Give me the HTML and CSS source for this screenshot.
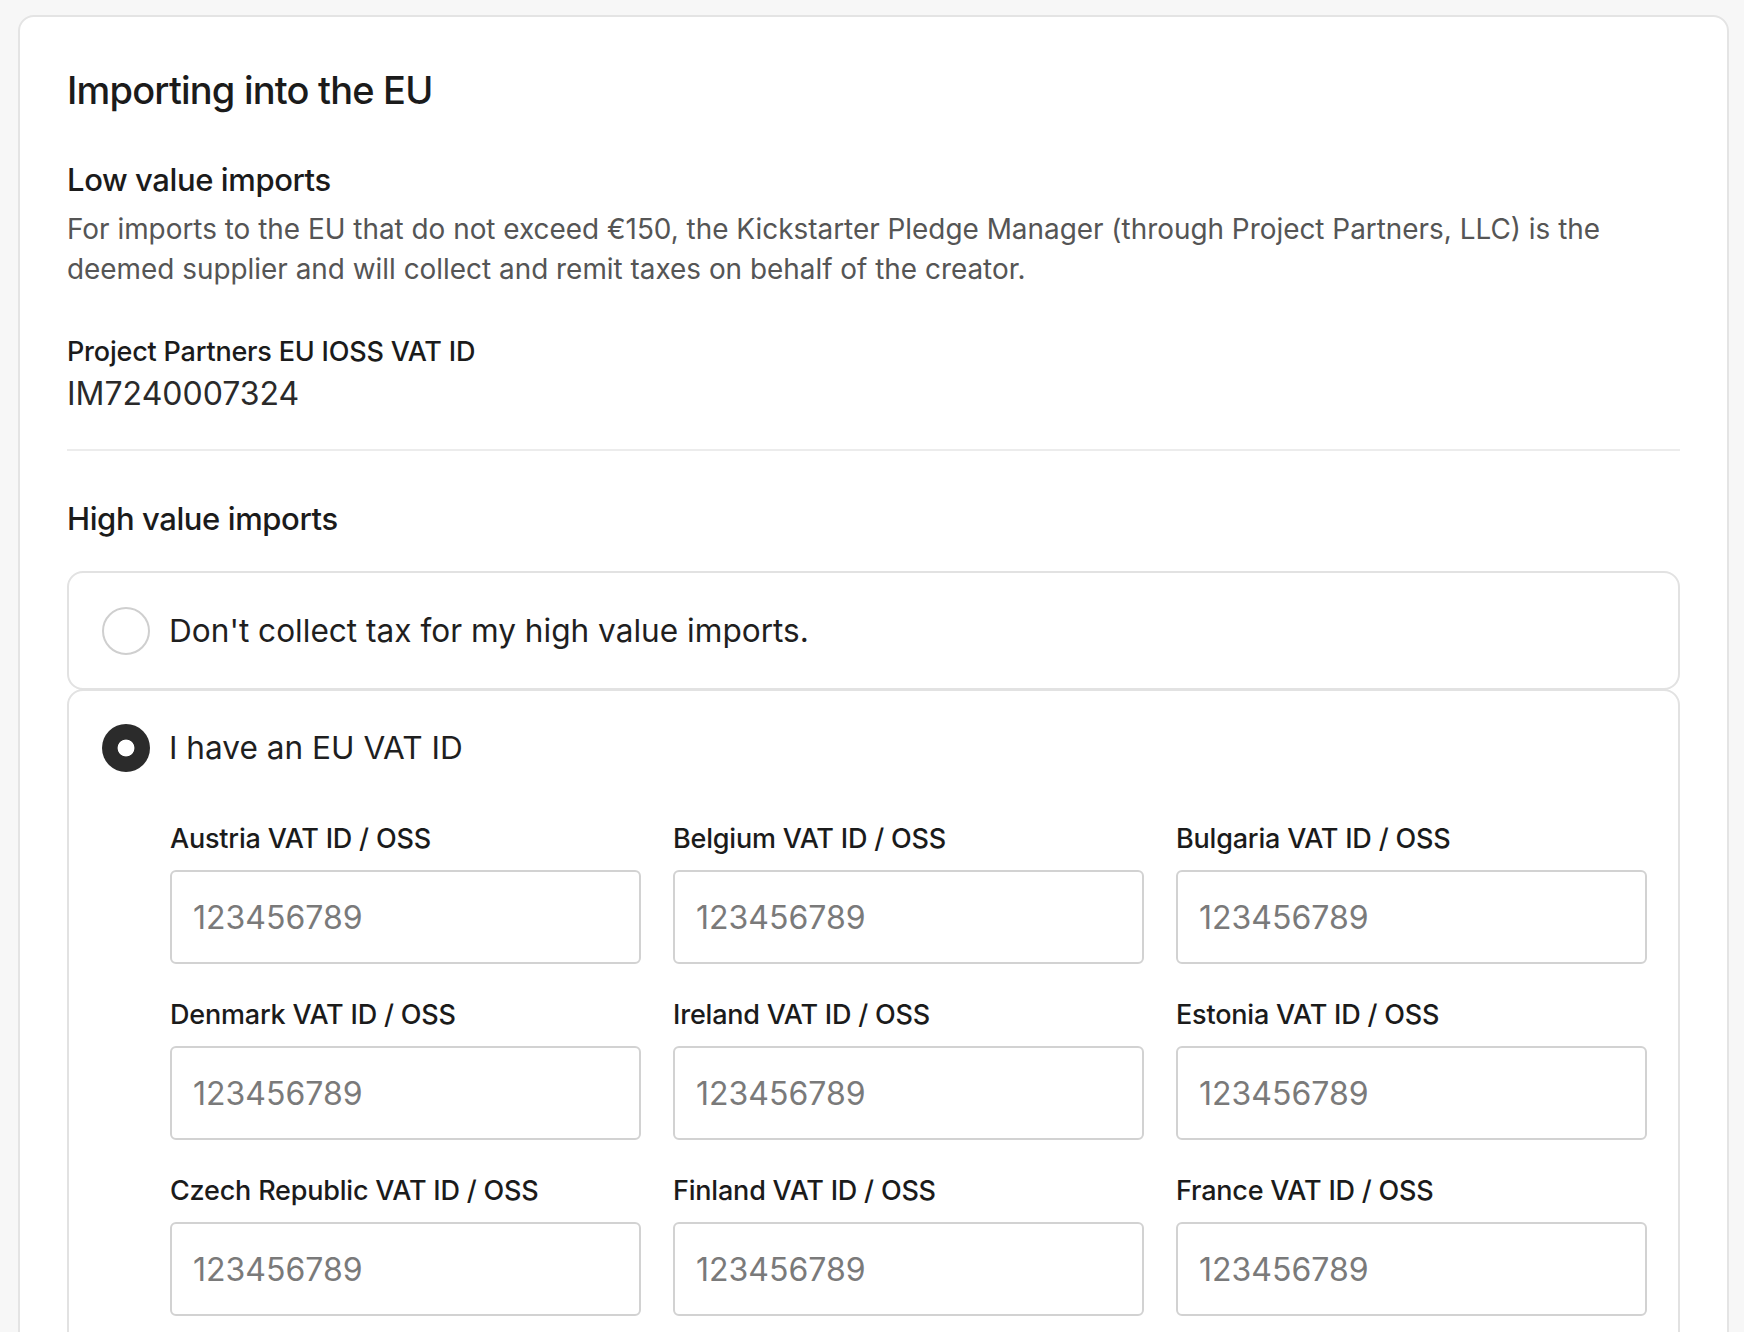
FILE: index.html
```html
<!DOCTYPE html>
<html lang="en">
<head>
<meta charset="utf-8">
<title>Importing into the EU</title>
<link rel="stylesheet" href="styles.css">
</head>
<body>
<main class="card">
  <h1 class="title">Importing into the EU</h1>
  <section class="low">
    <h2 class="subtitle">Low value imports</h2>
    <p class="desc">For imports to the EU that do not exceed €150, the Kickstarter Pledge Manager (through Project Partners, LLC) is the deemed supplier and will collect and remit taxes on behalf of the creator.</p>
    <div class="ioss">
      <div class="ioss-label">Project Partners EU IOSS VAT ID</div>
      <div class="ioss-value">IM7240007324</div>
    </div>
  </section>
  <hr class="divider">
  <section class="high">
    <h2 class="subtitle">High value imports</h2>
    <div class="options">
      <label class="option">
        <span class="option-row">
          <span class="radio"></span>
          <span class="option-text">Don't collect tax for my high value imports.</span>
        </span>
      </label>
      <div class="option option-selected">
        <div class="option-row">
          <span class="radio radio-on"></span>
          <span class="option-text">I have an EU VAT ID</span>
        </div>
        <div class="fields">
          <div class="field"><label class="field-label">Austria VAT ID / OSS</label><input class="field-input" placeholder="123456789"></div>
          <div class="field"><label class="field-label">Belgium VAT ID / OSS</label><input class="field-input" placeholder="123456789"></div>
          <div class="field"><label class="field-label">Bulgaria VAT ID / OSS</label><input class="field-input" placeholder="123456789"></div>
          <div class="field"><label class="field-label">Denmark VAT ID / OSS</label><input class="field-input" placeholder="123456789"></div>
          <div class="field"><label class="field-label">Ireland VAT ID / OSS</label><input class="field-input" placeholder="123456789"></div>
          <div class="field"><label class="field-label">Estonia VAT ID / OSS</label><input class="field-input" placeholder="123456789"></div>
          <div class="field"><label class="field-label">Czech Republic VAT ID / OSS</label><input class="field-input" placeholder="123456789"></div>
          <div class="field"><label class="field-label">Finland VAT ID / OSS</label><input class="field-input" placeholder="123456789"></div>
          <div class="field"><label class="field-label">France VAT ID / OSS</label><input class="field-input" placeholder="123456789"></div>
        </div>
      </div>
    </div>
  </section>
</main>
</body>
</html>
```
FILE: styles.css
```css
* { box-sizing: border-box; }
html, body { margin: 0; padding: 0; }
body {
  background: #f7f7f7;
  font-family: Inter, "Noto Sans", "Liberation Sans", sans-serif;
  color: #1b1b1b;
  padding: 15px 15px 0 18px;
  overflow: hidden;
  height: 1332px;
}
.card {
  background: #ffffff;
  border: 2px solid #e4e4e4;
  border-radius: 16px;
  padding: 50px 47px 0 47px;
  min-height: 1400px;
}
.title {
  margin: 0;
  font-size: 38px;
  font-weight: 500;
  letter-spacing: -0.8px;
  line-height: 46px;
}
.low { margin-top: 48px; }
.subtitle {
  margin: 0;
  font-size: 31px;
  font-weight: 500;
  letter-spacing: -0.4px;
  line-height: 38px;
}
.desc {
  margin: 10px 0 0 0;
  font-size: 27.9px;
  line-height: 40px;
  color: #555555;
}
.ioss { margin-top: 46px; }
.ioss-label {
  font-size: 27px;
  font-weight: 500;
  line-height: 34px;
  letter-spacing: -0.2px;
}
.ioss-value {
  font-size: 32px;
  line-height: 42px;
  color: #2a2a2a;
  margin-top: 4px;
}
.divider {
  border: 0;
  border-top: 2px solid #ececec;
  margin: 34px 0 0 0;
}
.high { margin-top: 49px; }
.options { margin-top: 33px; }
.option {
  display: block;
  border: 2px solid #e2e2e2;
  border-radius: 16px;
  padding: 34px 31px 33px 33px;
}
.option-selected { padding-top: 33px; }
.option + .option { margin-top: -1px; }
.option-row {
  display: flex;
  align-items: center;
  gap: 19px;
}
.radio {
  width: 48px;
  height: 48px;
  flex: none;
  border-radius: 50%;
  border: 2px solid #cfcfcf;
  background: #fff;
}
.radio-on {
  border: none;
  background: radial-gradient(circle, #ffffff 0 8px, #2b2b2b 8.8px);
}
.option-text {
  font-size: 31.6px;
  line-height: 44px;
  color: #1f1f1f;
}
.fields {
  display: grid;
  grid-template-columns: repeat(3, minmax(0, 1fr));
  column-gap: 32px;
  row-gap: 35px;
  margin: 51px 0 0 68px;
}
.field { display: flex; flex-direction: column; min-width: 0; }
.field-label {
  font-size: 27px;
  font-weight: 500;
  line-height: 32px;
  letter-spacing: -0.2px;
  color: #1b1b1b;
}
.field-input {
  margin-top: 15px;
  width: 100%;
  height: 94px;
  border: 2px solid #d2d2d2;
  border-radius: 6px;
  padding: 0 21px;
  font-family: inherit;
  font-size: 32px;
  color: #222;
  background: #fff;
  outline: none;
}
.field-input::placeholder { color: #7a7a7a; }
```
